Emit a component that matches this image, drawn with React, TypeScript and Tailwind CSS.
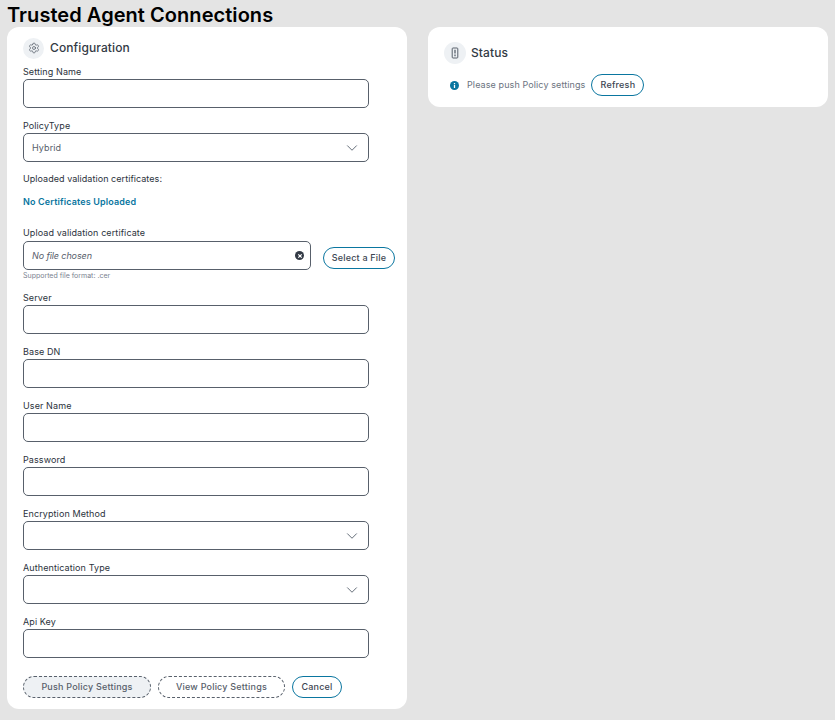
import { Settings, ChevronDown } from 'lucide-react';

const labelCls = 'block text-[9px] leading-[12px] font-normal tracking-[0.1px] text-[#2b323c] mb-[1px]';
const inputCls = 'block w-[346px] h-[29px] rounded-[5px] border border-[#58606b] bg-white';

const Field = ({ label }: { label: string }) => (
    <div className="mb-[12px]">
        <label className={labelCls}>{label}</label>
        <div className={inputCls} />
    </div>
);

const SelectField = ({ label, value }: { label: string; value?: string }) => (
    <div className="mb-[12px]">
        <label className={labelCls}>{label}</label>
        <div className={`${inputCls} flex items-center justify-between pl-2 pr-[7px]`}>
            <span className="text-[9px] tracking-[0.1px] text-[#58606b]">{value}</span>
            <ChevronDown className="w-[18px] h-[18px] text-[#5a6470]" strokeWidth={1.25} />
        </div>
    </div>
);

const OutlineBtn = ({ children, width }: { children: string; width: string }) => (
    <button className={`${width} h-[22px] shrink-0 whitespace-nowrap rounded-full border border-[#0a76a0] bg-white text-[9px] font-medium tracking-[0.2px] text-[#3d4652]`}>
        {children}
    </button>
);

export default function App() {
    return (
        <div className="min-h-[720px] bg-[#e4e4e4] font-['Inter',sans-serif] px-[7px] relative">
            <h1 className="text-[20px] leading-[27px] h-[27px] font-semibold tracking-[0.05px] text-black pt-[2px]">Trusted Agent Connections</h1>
            <div className="flex items-start gap-[21px]">
                <div className="w-[400px] h-[682px] bg-white rounded-[12px] px-[16px] pt-[9px]">
                    <div className="flex items-center gap-[6px] h-[24px] mb-[6px]">
                        <div className="w-[21px] h-[21px] rounded-full bg-[#eef1f4] flex items-center justify-center">
                            <Settings className="w-[12px] h-[12px] text-[#58606b]" strokeWidth={1.5} />
                        </div>
                        <h2 className="text-[12px] font-medium tracking-[0.1px] text-[#333a45]">Configuration</h2>
                    </div>
                    <Field label="Setting Name" />
                    <SelectField label="PolicyType" value="Hybrid" />
                    <div className="text-[9px] leading-[12px] font-normal tracking-[0.05px] text-[#2b323c] -mt-[1px]">Uploaded validation certificates:</div>
                    <div className="text-[9px] leading-[12px] font-semibold tracking-[0.15px] text-[#0a76a0] mt-[11px] mb-[19px]">No Certificates Uploaded</div>
                    <label className="block text-[9px] leading-[12px] font-normal tracking-[0.1px] text-[#2b323c] mb-[2px]">Upload validation certificate</label>
                    <div className="flex items-start gap-[12px]">
                        <div className="shrink-0">
                            <div className="w-[288px] h-[29px] rounded-[5px] border border-[#58606b] flex items-center justify-between pl-2 pr-[6px]">
                                <span className="text-[9px] italic tracking-[-0.1px] text-[#58606b]">No file chosen</span>
                                <span className="w-[9px] h-[9px] rounded-full bg-[#333a45] text-white flex items-center justify-center">
                                    <svg viewBox="0 0 8 8" className="w-[8px] h-[8px]"><path d="M2.3 2.3l3.4 3.4M5.7 2.3l-3.4 3.4" stroke="currentColor" strokeWidth="1.2" /></svg>
                                </span>
                            </div>
                            <div className="text-[7px] leading-[8px] mt-[2px] text-[#7a8290] mb-[12px]">Supported file format: .cer</div>
                        </div>
                        <div className="flex pt-[6px] shrink-0"><OutlineBtn width="w-[72px]">Select a File</OutlineBtn></div>
                    </div>
                    <Field label="Server" />
                    <Field label="Base DN" />
                    <Field label="User Name" />
                    <Field label="Password" />
                    <SelectField label="Encryption Method" />
                    <SelectField label="Authentication Type" />
                    <Field label="Api Key" />
                    <div className="flex gap-[7px] mt-[18px]">
                        <button className="w-[128px] h-[22px] rounded-full border border-dashed border-[#58606b] bg-[#eef1f4] text-[9px] font-medium tracking-[0.2px] text-[#58606b]">Push Policy Settings</button>
                        <button className="w-[127px] h-[22px] rounded-full border border-dashed border-[#58606b] bg-white text-[9px] font-medium tracking-[0.2px] text-[#58606b]">View Policy Settings</button>
                        <OutlineBtn width="w-[50px]">Cancel</OutlineBtn>
                    </div>
                </div>
                <div className="w-[400px] h-[80px] bg-white rounded-[12px] px-[16px] pt-[15px]">
                    <div className="flex items-center gap-[5px] h-[22px] mb-[10px]">
                        <div className="w-[22px] h-[22px] rounded-full bg-[#eef1f4] flex items-center justify-center">
                            <svg viewBox="0 0 12 12" className="w-[12px] h-[12px] text-[#58606b]" fill="none">
                                <rect x="3.2" y="1" width="5.6" height="10" rx="0.8" stroke="currentColor" strokeWidth="1" />
                                <path d="M6 2.8v3.6M6 7.6v1.6" stroke="currentColor" strokeWidth="1.3" />
                            </svg>
                        </div>
                        <h2 className="text-[12px] font-medium tracking-[0.1px] text-[#333a45]">Status</h2>
                    </div>
                    <div className="flex items-center pl-[6px]">
                        <svg viewBox="0 0 10 10" className="w-[9px] h-[9px] mr-[8px]">
                            <circle cx="5" cy="5" r="5" fill="#0a76a0" />
                            <path d="M5 2.2v1.3M5 4.5v3.2" stroke="#fff" strokeWidth="1.4" />
                        </svg>
                        <span className="text-[9px] tracking-[0.1px] text-[#6b7380] mr-[6px]">Please push Policy settings</span>
                        <OutlineBtn width="w-[53px]">Refresh</OutlineBtn>
                    </div>
                </div>
            </div>
        </div>
    );
}
